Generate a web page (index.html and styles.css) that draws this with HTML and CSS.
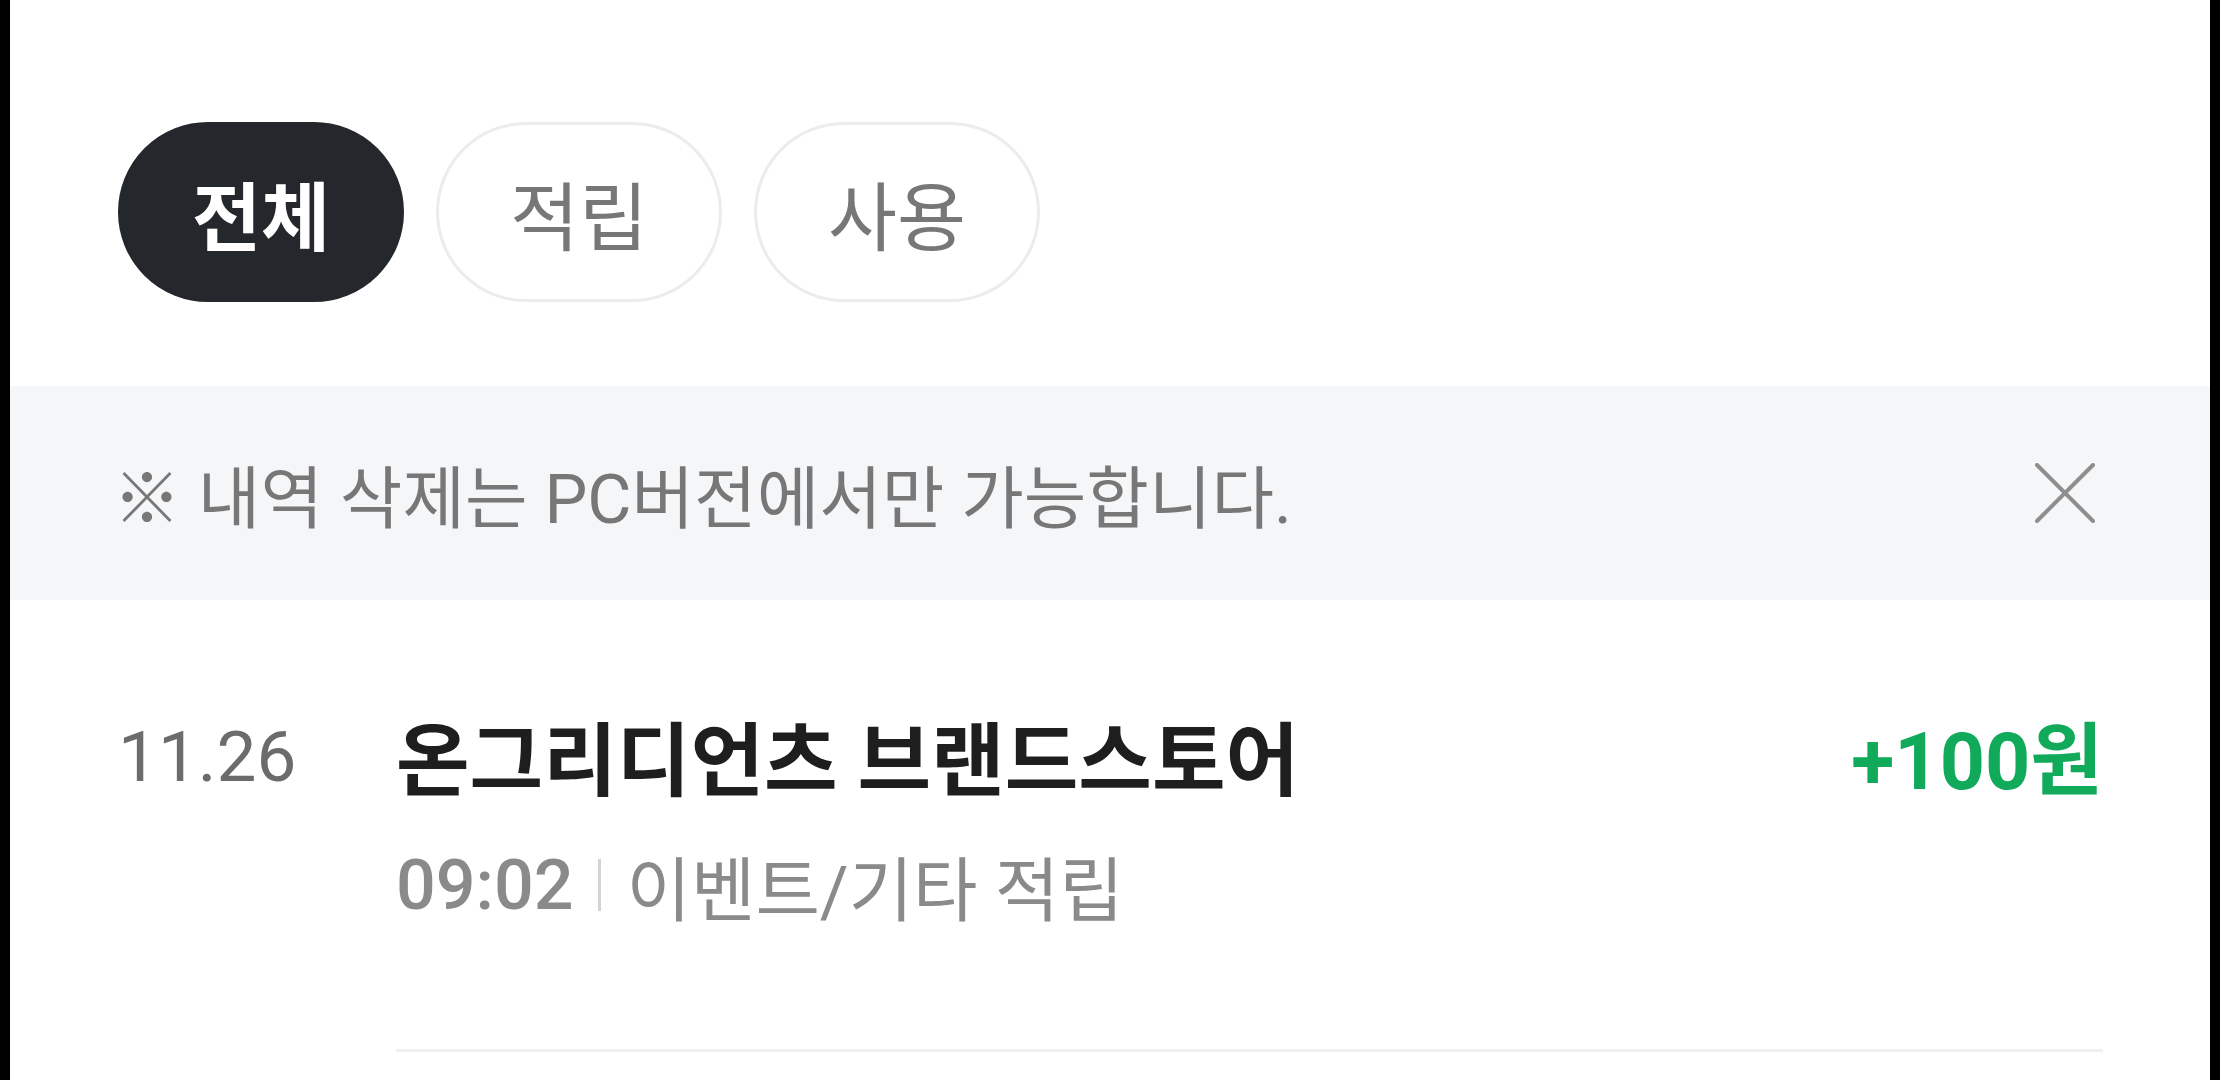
FILE: index.html
```html
<!DOCTYPE html>
<html lang="ko">
<head>
    <meta charset="UTF-8">
    <meta name="viewport" content="width=device-width, initial-scale=1.0">
    <title>포인트 내역</title>
    <link rel="stylesheet" href="styles.css">
</head>
<body>
    <div class="screen">
        <div class="tabs">
            <button class="tab active">전체</button>
            <button class="tab">적립</button>
            <button class="tab">사용</button>
        </div>

        <div class="notice">
            <p class="notice-text">※ 내역 삭제는 PC버전에서만 가능합니다.</p>
            <button class="notice-close" aria-label="닫기">
                <svg width="60" height="60" viewBox="0 0 60 60">
                    <path d="M2 2 L58 58 M58 2 L2 58" stroke="#8e8e8e" stroke-width="4" stroke-linecap="round" fill="none"/>
                </svg>
            </button>
        </div>

        <div class="history-row">
            <div class="history-date">11.26</div>
            <div class="history-main">
                <div class="history-top">
                    <span class="history-title">온그리디언츠 브랜드스토어</span>
                    <span class="history-amount">+100원</span>
                </div>
                <div class="history-sub">
                    <span class="history-time">09:02</span>
                    <span class="history-sep"></span>
                    <span class="history-type">이벤트/기타 적립</span>
                </div>
            </div>
        </div>
    </div>
</body>
</html>
```

FILE: styles.css
```css
body {
    margin: 0;
    background: #000;
    font-family: Roboto, "Noto Sans CJK KR", sans-serif;
    height: 1080px;
    overflow: hidden;
}

.screen {
    margin: 0 10px;
    background: #fff;
    height: 1080px;
}

/* filter pills */
.tabs {
    display: flex;
    gap: 32px;
    padding: 122px 0 0 108px;
}

.tab {
    width: 286px;
    height: 180px;
    border-radius: 90px;
    border: 3px solid #ebecee;
    background: #fff;
    color: #777;
    font-family: Roboto, "Noto Sans CJK KR", sans-serif;
    font-size: 75px;
    padding: 0;
    box-sizing: border-box;
}

.tab.active {
    background: #24272c;
    border-color: #24272c;
    color: #fff;
    font-weight: bold;
}

/* notice banner */
.notice {
    margin-top: 84px;
    height: 214px;
    background: #f5f6f8;
    display: flex;
    align-items: center;
    justify-content: space-between;
    padding: 0 115px 0 103px;
}

.notice-text {
    margin: 0;
    font-size: 68px;
    color: #777;
}

.notice-close {
    border: none;
    background: none;
    padding: 0;
    width: 60px;
    height: 60px;
    display: flex;
}

/* history row */
.history-row {
    display: flex;
    padding: 0 107px 0 108px;
}

.history-date {
    width: 278px;
    padding-top: 112px;
    font-size: 71px;
    line-height: 90px;
    color: #6c6c6c;
}

.history-main {
    flex: 1;
    padding: 112px 0 124px;
    border-bottom: 3px solid #f0f0f0;
}

.history-top {
    display: flex;
    justify-content: space-between;
    align-items: center;
    line-height: 100px;
}

.history-title {
    font-size: 80px;
    font-weight: bold;
    color: #1e1e1e;
}

.history-amount {
    font-size: 79px;
    font-weight: bold;
    color: #10aa5a;
}

.history-sub {
    display: flex;
    align-items: center;
    margin-top: 33px;
    height: 80px;
    color: #8a8a8a;
}

.history-time {
    font-size: 70px;
    font-weight: 500;
}

.history-sep {
    width: 3px;
    height: 52px;
    background: #d4d4d4;
    margin: 0 26px 0 24px;
}

.history-type {
    font-size: 70px;
}
```
